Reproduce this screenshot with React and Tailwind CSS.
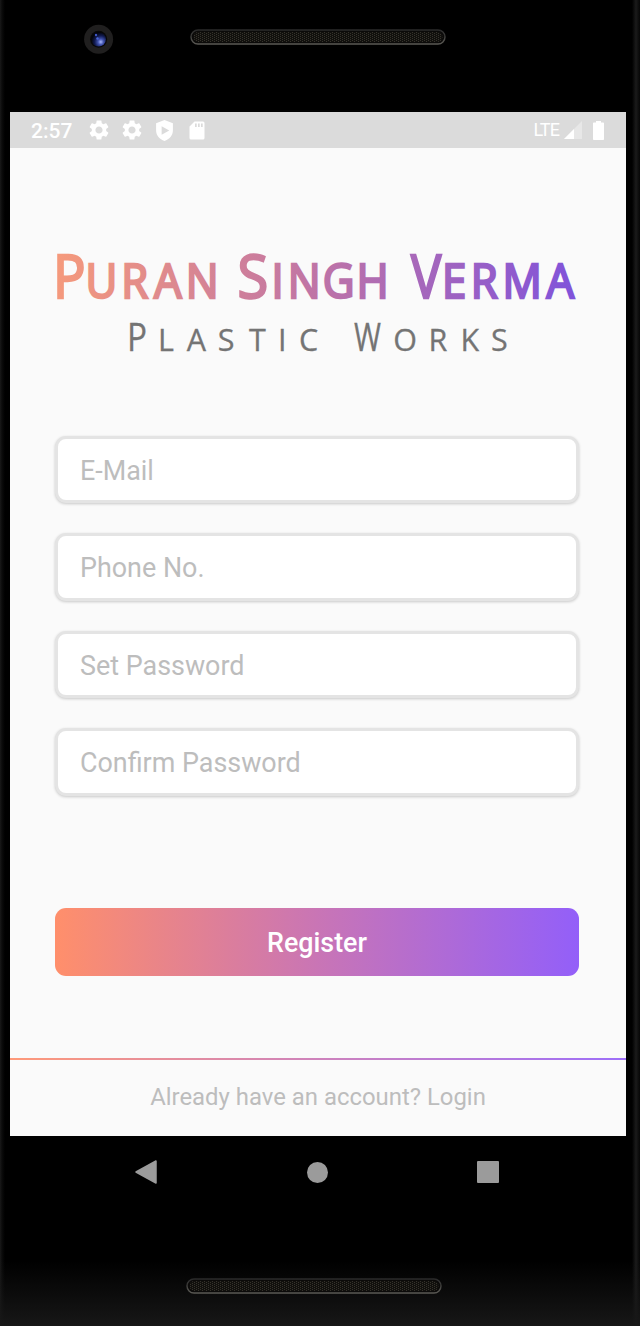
import React from "react";

const GEAR =
  "M19.14 12.94c.04-.3.06-.61.06-.94 0-.32-.02-.64-.07-.94l2.03-1.58c.18-.14.23-.41.12-.61l-1.92-3.32c-.12-.22-.37-.29-.59-.22l-2.39.96c-.5-.38-1.03-.7-1.62-.94l-.36-2.54c-.04-.24-.24-.41-.48-.41h-3.84c-.24 0-.43.17-.47.41l-.36 2.54c-.59.24-1.13.57-1.62.94l-2.39-.96c-.22-.08-.47 0-.59.22L2.74 8.87c-.12.21-.08.47.12.61l2.03 1.58c-.05.3-.09.63-.09.94s.02.64.07.94l-2.03 1.58c-.18.14-.23.41-.12.61l1.92 3.32c.12.22.37.29.59.22l2.39-.96c.5.38 1.03.7 1.62.94l.36 2.54c.05.24.24.41.48.41h3.84c.24 0 .44-.17.47-.41l.36-2.54c.59-.24 1.13-.56 1.62-.94l2.39.96c.22.08.47 0 .59-.22l1.92-3.32c.12-.22.07-.47-.12-.61l-2.01-1.58zM12 15.6c-1.98 0-3.6-1.62-3.6-3.6s1.62-3.6 3.6-3.6 3.6 1.62 3.6 3.6-1.62 3.6-3.6 3.6z";

function Gear() {
  return (
    <svg viewBox="2 2 20 20" className="h-[20px] w-[20px] shrink-0" fill="#fff">
      <path d={GEAR} />
    </svg>
  );
}

function Speaker({ id }) {
  return (
    <svg width="256" height="16" viewBox="0 0 256 16" className="shrink-0">
      <defs>
        <pattern id={id} width="4" height="2" patternUnits="userSpaceOnUse">
          <rect width="4" height="2" fill="#11100d" />
          <rect width="1" height="1" fill="#36332c" />
          <rect x="2" y="1" width="1" height="1" fill="#36332c" />
        </pattern>
        <linearGradient id={id + "-rim"} x1="0" y1="0" x2="0" y2="1">
          <stop offset="0" stopColor="#2a2a2a" />
          <stop offset="1" stopColor="#5a5954" />
        </linearGradient>
      </defs>
      <rect x="1" y="1" width="254" height="14" rx="7" fill="#0b0a09" stroke={`url(#${id}-rim)`} strokeWidth="1.4" />
      <rect x="3.5" y="3" width="249" height="10" rx="5" fill={`url(#${id})`} />
    </svg>
  );
}

// The title is set slightly condensed; glyph positions are given in final pixels.
const CONDENSE = 0.93;
const at = (...xs) => xs.map((x) => (x / CONDENSE).toFixed(2)).join(" ");

function Wordmark() {
  return (
    <svg width="616" height="140" viewBox="10 220 616 140" className="block shrink-0" fontFamily='"Open Sans", "Noto Sans", sans-serif'>
      <defs>
        <linearGradient id="title" gradientUnits="userSpaceOnUse" x1="59" y1="240" x2="621" y2="310">
          <stop offset="0" stopColor="#f69a7b" />
          <stop offset="0.5" stopColor="#bf74a6" />
          <stop offset="1" stopColor="#7f52db" />
        </linearGradient>
      </defs>
      <text
        transform={`scale(${CONDENSE} 1)`}
        y="298.2"
        fill="url(#title)"
        stroke="url(#title)"
        strokeWidth="2.4"
        fontSize="47"
        fontWeight="400"
      >
        <tspan x={at(53)} fontSize="61" textLength="35" lengthAdjust="spacingAndGlyphs">P</tspan>
        <tspan x={at(85.5, 121.3, 154, 185.7, 216)}>URAN </tspan>
        <tspan x={at(237.5)} fontSize="61" textLength="33" lengthAdjust="spacingAndGlyphs">S</tspan>
        <tspan x={at(271.5, 287.7, 322.7, 356.6, 390)}>INGH </tspan>
        <tspan x={at(411)} fontSize="61" textLength="32.5" lengthAdjust="spacingAndGlyphs">V</tspan>
        <tspan x={at(442, 470.8, 502.5, 546.5)}>ERMA</tspan>
      </text>
      <text y="350.5" fill="#747474" stroke="#747474" strokeWidth="0.3" fontSize="30.5" fontWeight="400">
        <tspan x="127" fontSize="38.5" textLength="20" lengthAdjust="spacingAndGlyphs">P</tspan>
        <tspan x="158 186.700 217.700 249 278 299 320">LASTIC </tspan>
        <tspan x="354" fontSize="38.5" textLength="27" lengthAdjust="spacingAndGlyphs">W</tspan>
        <tspan x="393.300 428.500 460.500 491">ORKS</tspan>
      </text>
    </svg>
  );
}

const FIELDS = ["E-Mail", "Phone No.", "Set Password", "Confirm Password"];

function StatusBar() {
  return (
    <div className="flex h-[36px] shrink-0 items-center bg-[#dbdbdb] pr-[22px] pl-[21px] text-white">
      <span className="w-[58px] pt-[2px] text-[21px] leading-[34px] font-medium">2:57</span>
      <div className="flex items-center gap-[13px]">
        <Gear />
        <Gear />
        <svg viewBox="3 1 18 22" className="h-[21px] w-[19px]" fill="#fff">
          <path fillRule="evenodd" d="M12 1 3.2 4.5V12c0 5 3.7 9.3 8.8 11 5.100-1.700 8.800-6 8.800-11V4.500ZM9 7.500 17 12 9 16.500Z" />
        </svg>
        <svg viewBox="0 0 16 19" className="ml-[2px] h-[19px] w-[16px]" fill="#fff">
          <path fillRule="evenodd" d="M5.500.500H14A1.500 1.500 0 0 1 15.500 2v15A1.500 1.500 0 0 1 14 18.500H2A1.500 1.500 0 0 1 .500 17V5.500ZM6 2.500v3.500h1.700V2.500Zm3 0v3.500h1.700V2.500Zm3 0v3.500h1.700V2.500Z" />
        </svg>
      </div>
      <span className="ml-auto text-[18px] leading-[36px] tracking-[-0.9px]">LTE</span>
      <svg viewBox="0 0 18 18" className="ml-[5px] h-[18px] w-[18px]">
        <path d="M18 0v18H0Z" fill="#e7e7e7" />
        <path d="M10 8v10H0Z" fill="#fff" />
      </svg>
      <svg viewBox="0 0 11 19" className="mr-[0.5px] ml-[10.5px] h-[19px] w-[11px]" fill="#fff">
        <path d="M3 0h5v1.500h2.200q.800 0 .800.800v16q0 .700-.800.700H.800Q0 19 0 18.300v-16q0-.800.800-.800H3Z" />
      </svg>
    </div>
  );
}

export default function App() {
  return (
    <div className="flex h-[1326px] w-[640px] flex-col overflow-hidden bg-[linear-gradient(to_right,#191919_0px,#0b0b0b_2px,#000_5px,#000_632px,#1b1b1b_636px,#101010_638px,#070707_640px)] font-[Roboto,sans-serif]">
      <div className="flex h-[112px] shrink-0 items-start pl-[84px]">
        <svg width="30" height="30" viewBox="0 0 30 30" className="mt-[24px]">
          <defs>
            <radialGradient id="lens" cx="0.65" cy="0.68" r="0.65">
              <stop offset="0" stopColor="#a9b8ff" />
              <stop offset="0.3" stopColor="#4052ad" />
              <stop offset="0.65" stopColor="#111a50" />
              <stop offset="1" stopColor="#03040b" />
            </radialGradient>
          </defs>
          <circle cx="14.600" cy="15.300" r="14.500" fill="#201f1f" />
          <circle cx="14.600" cy="15.300" r="8.500" fill="#080808" />
          <circle cx="14.600" cy="15.300" r="7.300" fill="url(#lens)" />
          <circle cx="12" cy="11" r="1.200" fill="#3e57c4" />
          <circle cx="13.500" cy="14.500" r="1.200" fill="#4b66d6" />
        </svg>
        <div className="mt-[29px] ml-[76px] flex">
          <Speaker id="top-mesh" />
        </div>
      </div>

      <div className="ml-[10px] flex h-[1024px] w-[616px] shrink-0 flex-col bg-[#fafafa]">
        <StatusBar />
        <div className="h-[72px] shrink-0" />
        <Wordmark />
        <div className="mt-[75.5px] flex flex-col gap-[30px] px-[45px]">
          {FIELDS.map((label) => (
            <div
              key={label}
              className="flex h-[67.5px] w-[524px] items-center rounded-[11px] border-[3px] border-[#e4e4e4] bg-white pt-[3px] pl-[22px] text-[26.9px] text-[#bdbdbd] shadow-[0_1px_3px_rgba(0,0,0,0.2)]"
            >
              {label}
            </div>
          ))}
        </div>
        <button className="mt-[112.500px] ml-[45px] h-[67.500px] w-[524px] shrink-0 rounded-[11px] bg-[linear-gradient(to_right,#ff8f6b,#c975b5_50%,#935ff9)] pt-[3px] text-[26.8px] font-medium text-white">
          Register
        </button>
        <div className="mt-auto h-[2px] shrink-0 bg-[linear-gradient(to_right,#ff8f6b,#c975b5_50%,#935ff9)] opacity-90" />
        <div className="flex h-[76px] shrink-0 items-center justify-center text-[23.9px] text-[#bdbdbd]">
          Already have an account? Login
        </div>
      </div>

      <div className="flex h-[190px] shrink-0 flex-col bg-[linear-gradient(to_bottom,transparent_125px,#171717_190px)]">
        <div className="flex h-[72px] items-center pl-[135px]">
          <svg width="23" height="24" viewBox="0 0 23 24">
            <path d="M1 12 21 1v22Z" fill="#9b9b9b" stroke="#9b9b9b" strokeWidth="1.500" strokeLinejoin="round" />
          </svg>
          <div className="ml-[149px] h-[21px] w-[21px] rounded-full bg-[#9b9b9b]" />
          <div className="ml-[149px] h-[22px] w-[22px] rounded-[1px] bg-[#9b9b9b]" />
        </div>
        <div className="mt-[70px] ml-[186px] flex">
          <Speaker id="bottom-mesh" />
        </div>
      </div>
    </div>
  );
}
